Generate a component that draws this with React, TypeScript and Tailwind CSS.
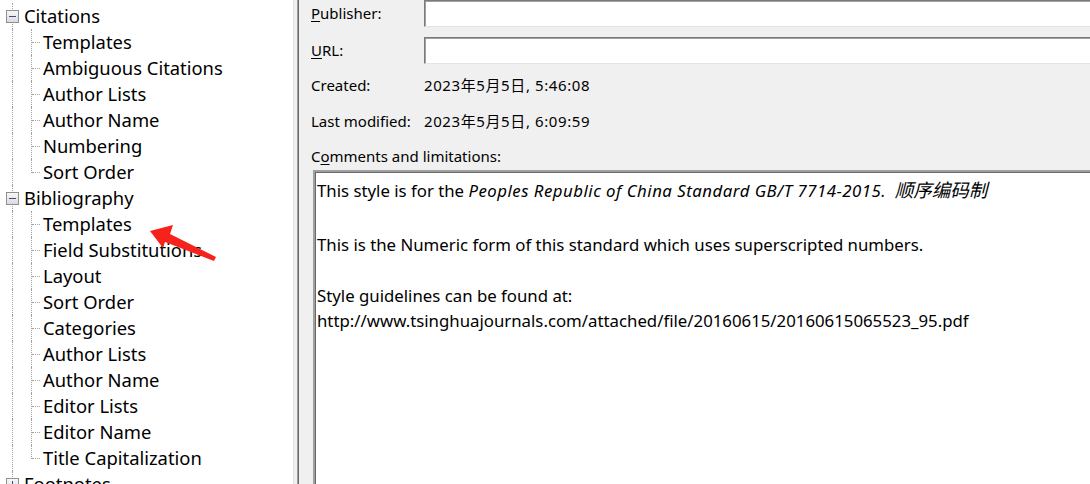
import React from 'react'

const font = { fontFamily: '"Noto Sans", "Noto Sans CJK SC", sans-serif' }

type Node = { label: string; children?: string[]; open?: boolean }

const tree: Node[] = [
  {
    label: 'Citations',
    open: true,
    children: ['Templates', 'Ambiguous Citations', 'Author Lists', 'Author Name', 'Numbering', 'Sort Order'],
  },
  {
    label: 'Bibliography',
    open: true,
    children: [
      'Templates',
      'Field Substitutions',
      'Layout',
      'Sort Order',
      'Categories',
      'Author Lists',
      'Author Name',
      'Editor Lists',
      'Editor Name',
      'Title Capitalization',
    ],
  },
  { label: 'Footnotes', open: false },
]

function ExpandBox({ open }: { open: boolean }) {
  return (
    <span className="absolute left-[6px] top-[7px] w-[13px] h-[13px] border border-[#8e8f8f] bg-gradient-to-b from-[#f7f7f7] to-[#dcdcdc] flex items-center justify-center">
      <span className="relative block w-[7px] h-[1px] bg-[#3b4f7a]">
        {!open && <span className="absolute left-[3px] -top-[3px] block w-[1px] h-[7px] bg-[#3b4f7a]" />}
      </span>
    </span>
  )
}

function TopRow({ node }: { node: Node }) {
  return (
    <div className="relative flex h-[26px] items-center">
      <div className="w-[24px] h-full shrink-0">
        <div className="ml-[12px] h-full border-l border-dotted border-[#a0a0a0]" />
      </div>
      <ExpandBox open={!!node.open} />
      <span className="text-[18.4px] text-black whitespace-nowrap">{node.label}</span>
    </div>
  )
}

function ChildRow({ label, last }: { label: string; last: boolean }) {
  return (
    <div className="flex h-[26px] items-center">
      <div className="w-[24px] h-full shrink-0">
        <div className="ml-[12px] h-full border-l border-dotted border-[#a0a0a0]" />
      </div>
      <div className="w-[19px] h-full shrink-0 flex">
        <div className={`ml-[7px] border-l border-dotted border-[#a0a0a0] ${last ? 'h-[14px]' : 'h-full'}`} />
        <div className="mt-[13px] w-[8px] h-0 border-t border-dotted border-[#a0a0a0]" />
      </div>
      <span className="text-[18.4px] text-black whitespace-nowrap">{label}</span>
    </div>
  )
}

function Field({ mn, rest }: { mn: string; rest: string }) {
  return (
    <div className="flex h-[27px] items-center">
      <div className="w-[113px] shrink-0 text-[15px]">
        <u className="underline-offset-2">{mn}</u>
        {rest}
      </div>
      <div className="flex-1 h-full bg-white border-t border-l border-t-[#7a7a7a] border-l-[#7a7a7a] border-b border-b-[#e3e3e3] shadow-[inset_1px_1px_0_#a0a0a0]" />
    </div>
  )
}

export default function App() {
  return (
    <div className="flex w-[1090px] h-[484px] overflow-hidden bg-white" style={font}>
      <div className="relative w-[293px] h-full shrink-0 bg-white overflow-hidden">
        <div className="pt-[3px]">
          {tree.map((n) => (
            <div key={n.label}>
              <TopRow node={n} />
              {n.open &&
                n.children?.map((c, i) => (
                  <ChildRow key={c + i} label={c} last={i === n.children!.length - 1} />
                ))}
            </div>
          ))}
        </div>
        {/* red annotation arrow */}
        <svg className="absolute left-0 top-0" width="293" height="484" viewBox="0 0 293 484">
          <polygon points="150,231 173,225 170,234 216,257 214,261 165,242 163,248" fill="#f5231c" />
        </svg>
      </div>

      <div className="flex h-full shrink-0">
        <div className="w-[1px] bg-[#e3e3e3]" />
        <div className="w-[3px] bg-[#f0f0f0]" />
        <div className="w-[1px] bg-[#a0a0a0]" />
        <div className="w-[1px] bg-[#696969]" />
      </div>

      <div className="flex-1 h-full bg-[#f0f0f0] pl-[12px] flex flex-col text-black">
        <Field mn="P" rest="ublisher:" />
        <div className="mt-[10px]">
          <Field mn="U" rest="RL:" />
        </div>
        <div className="mt-[8px] flex h-[26px] items-center text-[15px]">
          <div className="w-[113px] shrink-0">Created:</div>
          <div className="tracking-[0.6px]">2023年5月5日, 5:46:08</div>
        </div>
        <div className="mt-[10px] flex h-[26px] items-center text-[15px]">
          <div className="w-[113px] shrink-0">Last modified:</div>
          <div className="tracking-[0.6px]">2023年5月5日, 6:09:59</div>
        </div>
        <div className="mt-[9px] h-[26px] flex items-center text-[15px]">
          <span>
            C<u className="underline-offset-2">o</u>mments and limitations:
          </span>
        </div>
        <div className="mt-[1px] ml-[2px] flex-1 bg-white border-t-2 border-l-2 border-[#a0a0a0] shadow-[inset_1px_1px_0_#696969] px-[2px] pt-[5px] text-[16.8px] leading-[26px]">
          <p className="whitespace-nowrap">
            This style is for the{' '}
            <i className="tracking-[0.5px]">Peoples Republic of China Standard GB/T 7714-2015.</i>
            {'\u00a0\u00a0'}
            <i className="text-[18.5px]">顺序编码制</i>
          </p>
          <p className="mt-[28px] whitespace-nowrap">
            This is the Numeric form of this standard which uses superscripted numbers.
          </p>
          <p className="mt-[25px] leading-[25px] whitespace-nowrap">
            Style guidelines can be found at:
            <br />
            http://www.tsinghuajournals.com/attached/file/20160615/20160615065523_95.pdf
          </p>
        </div>
      </div>
    </div>
  )
}
